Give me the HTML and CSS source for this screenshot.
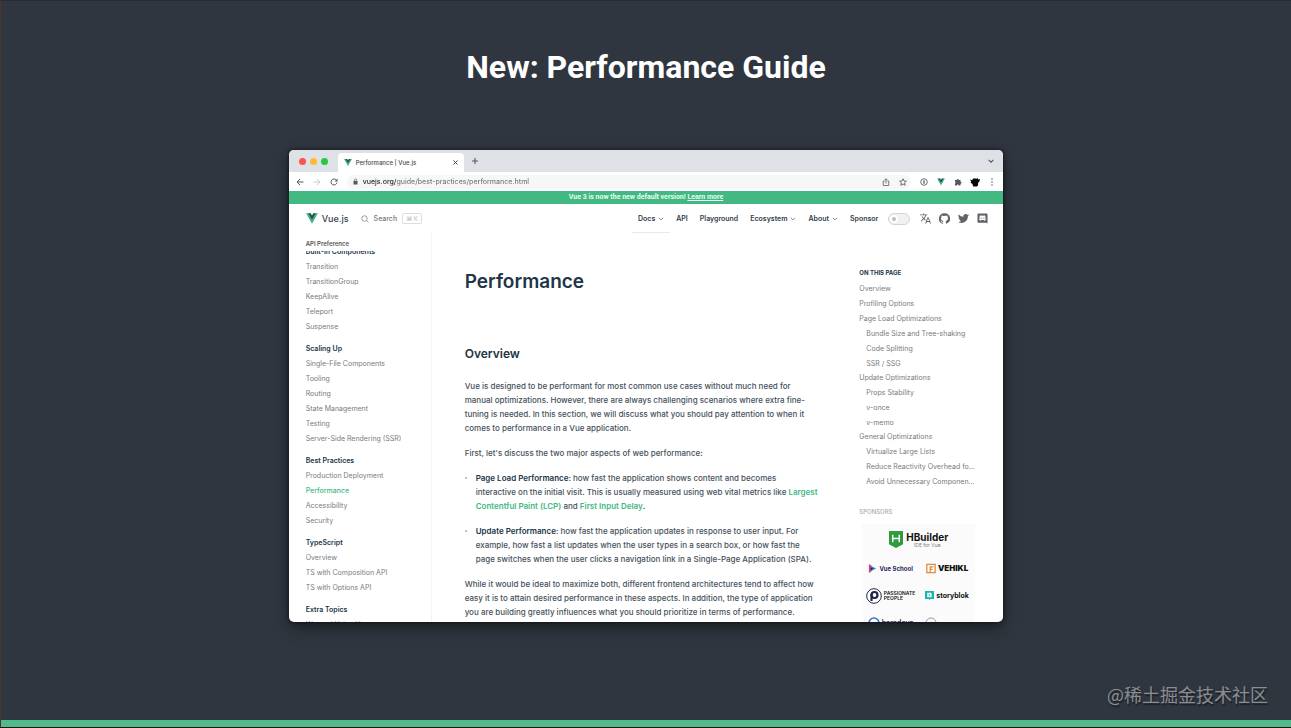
FILE: index.html
```html
<!DOCTYPE html>
<html lang="en">
<head>
<meta charset="utf-8">
<title>New: Performance Guide</title>
<link rel="stylesheet" href="styles.css">
</head>
<body>
<svg class="defs" aria-hidden="true">
  <symbol id="vue" viewBox="0 0 24 21"><path fill="#41b883" d="M0 0h9.200L12 4.800 14.800 0H24L12 20.800z"/><path fill="#34495e" d="M4.600 0h4.600L12 4.800 14.800 0h4.600L12 12.800z"/></symbol>
  <symbol id="chev" viewBox="0 0 10 10"><path d="M1.500 3l3.500 3.500L8.500 3" fill="none" stroke="currentColor" stroke-width="1.400"/></symbol>
</svg>
<main class="slide">
  <h1 class="slide-title">New: Performance Guide</h1>
  <section class="window">
    <div class="tabs">
      <div class="lights"><i class="red"></i><i class="yellow"></i><i class="green"></i></div>
      <div class="tab">
        <svg class="tab-logo"><use href="#vue"/></svg><span>Performance | Vue.js</span>
        <button class="icon-btn close" aria-label="Close tab"><svg viewBox="0 0 10 10"><path d="M1 1l8 8M9 1l-8 8" stroke="currentColor" stroke-width="2"/></svg></button>
      </div>
      <button class="icon-btn plus" aria-label="New tab"><svg viewBox="0 0 10 10"><path d="M5 0v10M0 5h10" stroke="currentColor" stroke-width="1.800"/></svg></button>
      <button class="icon-btn tab-more" aria-label="Search tabs"><svg viewBox="0 0 10 10"><path d="M1 3l4 4 4-4" fill="none" stroke="currentColor" stroke-width="1.800"/></svg></button>
    </div>
    <div class="toolbar">
      <button class="icon-btn" aria-label="Back"><svg viewBox="0 0 16 16"><path d="M15 8H2M8 2L2 8l6 6" fill="none" stroke="currentColor" stroke-width="2"/></svg></button>
      <button class="icon-btn faint" aria-label="Forward"><svg viewBox="0 0 16 16"><path d="M1 8h13M8 2l6 6-6 6" fill="none" stroke="currentColor" stroke-width="2"/></svg></button>
      <button class="icon-btn" aria-label="Reload"><svg viewBox="0 0 16 16"><path d="M13 4.500A6 6 0 1 0 14 9" fill="none" stroke="currentColor" stroke-width="2"/><path d="M15 1v6H9z" fill="currentColor"/></svg></button>
      <div class="address">
        <svg class="lock" viewBox="0 0 10 12"><path d="M1 5h8v7H1z" fill="currentColor"/><path d="M2.700 5V3.300a2.300 2.300 0 0 1 4.600 0V5" fill="none" stroke="currentColor" stroke-width="1.400"/></svg>
        <input class="url" type="text" aria-label="Address" value="vuejs.org/guide/best-practices/performance.html">
        <button class="icon-btn" aria-label="Share"><svg viewBox="0 0 16 16"><path d="M5 6H2.500v9h11V6H11M8 11V2M5 4.500L8 1.500l3 3" fill="none" stroke="currentColor" stroke-width="1.600"/></svg></button>
        <button class="icon-btn" aria-label="Bookmark"><svg viewBox="0 0 16 16"><path d="M8 1.500l2 4.500 4.800.4-3.700 3.200 1.200 4.900L8 12l-4.300 2.500 1.200-4.900L1.200 6.400 6 6z" fill="none" stroke="currentColor" stroke-width="1.700"/></svg></button>
      </div>
      <div class="extensions">
        <button class="icon-btn" aria-label="Password manager"><svg viewBox="0 0 16 16"><circle cx="8" cy="8" r="6.600" fill="none" stroke="currentColor" stroke-width="1.700"/><path d="M8 4.500v7" stroke="currentColor" stroke-width="2.600"/></svg></button>
        <button class="icon-btn" aria-label="Vue devtools"><svg><use href="#vue"/></svg></button>
        <button class="icon-btn" aria-label="Extensions"><svg viewBox="0 0 16 16"><path fill="currentColor" d="M2 4h3.500a2 2 0 1 1 4 0H13v3.500a2 2 0 1 1 0 4V15H9.500a2 2 0 0 0-4 0H2v-4a2 2 0 0 0 0-3.500z"/></svg></button>
        <button class="icon-btn avatar" aria-label="Profile"><svg viewBox="0 0 16 16"><path fill="#050505" d="M0 4l4 1V3l4-1 2 1 2-2 1 3 3-1-1 4-2 2v4l-2 2H5l-1-4-3-2 1-2z"/></svg></button>
        <button class="icon-btn" aria-label="Menu"><svg viewBox="0 0 16 16"><g fill="currentColor"><circle cx="8" cy="2" r="1.500"/><circle cx="8" cy="8" r="1.500"/><circle cx="8" cy="14" r="1.500"/></g></svg></button>
      </div>
    </div>
    <div class="banner">Vue 3 is now the new default version! <a href="#">Learn more</a></div>
    <header class="nav">
      <a class="brand" href="#"><svg><use href="#vue"/></svg>Vue.js</a>
      <button class="search"><svg viewBox="0 0 16 16"><circle cx="7" cy="7" r="5.500" fill="none" stroke="currentColor" stroke-width="1.400"/><path d="M11 11l4 4" stroke="currentColor" stroke-width="1.400"/></svg>Search<kbd>⌘ K</kbd></button>
      <nav class="menu">
        <a class="active" href="#">Docs<svg><use href="#chev"/></svg></a>
        <a href="#">API</a>
        <a href="#">Playground</a>
        <a href="#">Ecosystem<svg><use href="#chev"/></svg></a>
        <a href="#">About<svg><use href="#chev"/></svg></a>
        <a href="#">Sponsor</a>
      </nav>
      <button class="toggle" role="switch" aria-checked="false" aria-label="Dark mode"><i></i></button>
      <div class="social">
        <a href="#" aria-label="Language"><svg viewBox="0 0 24 24"><path fill="currentColor" d="M0 3h7V1h2v2h7v2h-2.500C12.800 8 11.400 10.400 9.600 12.200l2.800 2.600-.8 2L8 13.600l-5 5-1.400-1.400 5-5C5.200 10.600 4.200 9 3.600 7.500h2.200c.6 1.200 1.300 2.200 2.300 3.300C9.700 9.100 10.800 7.200 11.400 5H0zM16.500 9h2.200L24 23h-2.200l-1.300-3.500h-5.800L13.400 23h-2.200zm-1.100 8.500h4.400l-2.200-5.800z"/></svg></a>
        <a href="#" aria-label="GitHub"><svg viewBox="0 0 24 24"><path fill="currentColor" d="M12 .3a12 12 0 0 0-3.800 23.400c.6.100.8-.3.800-.6v-2c-3.300.7-4-1.600-4-1.600-.6-1.400-1.400-1.800-1.400-1.800-1-.7.1-.7.1-.7 1.200 0 1.900 1.200 1.900 1.200 1 1.800 2.800 1.300 3.500 1 0-.8.400-1.300.7-1.600-2.700-.3-5.500-1.300-5.500-6 0-1.200.5-2.300 1.300-3.100-.2-.4-.6-1.600 0-3.200 0 0 1-.3 3.400 1.200a11.500 11.500 0 0 1 6 0c2.300-1.500 3.300-1.200 3.300-1.200.6 1.600.2 2.800.1 3.200.8.800 1.300 1.900 1.300 3.200 0 4.600-2.800 5.600-5.500 5.900.5.400.9 1 .9 2.200v3.300c0 .3.100.7.800.6A12 12 0 0 0 12 .3"/></svg></a>
        <a href="#" aria-label="Twitter"><svg viewBox="0 0 24 24"><path fill="currentColor" d="M24 4.600a10 10 0 0 1-2.800.8 4.900 4.900 0 0 0 2.100-2.700 10 10 0 0 1-3.100 1.200 4.900 4.900 0 0 0-8.400 4.500A14 14 0 0 1 1.700 3.100a4.900 4.900 0 0 0 1.500 6.600 4.900 4.900 0 0 1-2.200-.6 4.900 4.900 0 0 0 3.900 4.900 5 5 0 0 1-2.200.1 4.900 4.900 0 0 0 4.600 3.400A9.900 9.900 0 0 1 0 19.500a14 14 0 0 0 21.500-12.400A10 10 0 0 0 24 4.600z"/></svg></a>
        <a href="#" aria-label="Discord"><svg viewBox="0 0 24 24"><path fill="currentColor" fill-rule="evenodd" d="M3 1h18a2 2 0 0 1 2 2v20l-3-2H3a2 2 0 0 1-2-2V3a2 2 0 0 1 2-2zm3 5L5 15l3 2 1-2h6l1 2 3-2-1-9-3-1-1 1h-4L9 5zm3 4a1.200 1.200 0 1 1 0 2.400 1.200 1.200 0 0 1 0-2.400zm6 0a1.200 1.200 0 1 1 0 2.400 1.200 1.200 0 0 1 0-2.400z"/></svg></a>
      </div>
    </header>
    <div class="content">
      <aside class="sidebar">
        <div class="pref">API Preference</div>
        <div class="groups">
          <section><h2>Built-in Components</h2><a href="#">Transition</a><a href="#">TransitionGroup</a><a href="#">KeepAlive</a><a href="#">Teleport</a><a href="#">Suspense</a></section>
          <section><h2>Scaling Up</h2><a href="#">Single-File Components</a><a href="#">Tooling</a><a href="#">Routing</a><a href="#">State Management</a><a href="#">Testing</a><a href="#">Server-Side Rendering (SSR)</a></section>
          <section><h2>Best Practices</h2><a href="#">Production Deployment</a><a class="current" href="#">Performance</a><a href="#">Accessibility</a><a href="#">Security</a></section>
          <section><h2>TypeScript</h2><a href="#">Overview</a><a href="#">TS with Composition API</a><a href="#">TS with Options API</a></section>
          <section><h2>Extra Topics</h2><a href="#">Ways of Using Vue</a></section>
        </div>
      </aside>
      <article class="doc">
        <h2 class="doc-title">Performance</h2>
        <h3>Overview</h3>
        <p>Vue is designed to be performant for most common use cases without much need for<br>manual optimizations. However, there are always challenging scenarios where extra fine-<br>tuning is needed. In this section, we will discuss what you should pay attention to when it<br>comes to performance in a Vue application.</p>
        <p>First, let's discuss the two major aspects of web performance:</p>
        <ul>
          <li><strong>Page Load Performance</strong>: how fast the application shows content and becomes<br>interactive on the initial visit. This is usually measured using web vital metrics like <a href="#">Largest<br>Contentful Paint (LCP)</a> and <a href="#">First Input Delay</a>.</li>
          <li><strong>Update Performance</strong>: how fast the application updates in response to user input. For<br>example, how fast a list updates when the user types in a search box, or how fast the<br>page switches when the user clicks a navigation link in a Single-Page Application (SPA).</li>
        </ul>
        <p>While it would be ideal to maximize both, different frontend architectures tend to affect how<br>easy it is to attain desired performance in these aspects. In addition, the type of application<br>you are building greatly influences what you should prioritize in terms of performance.</p>
      </article>
      <aside class="toc">
        <h2>ON THIS PAGE</h2>
        <ul>
          <li><a href="#">Overview</a></li>
          <li><a href="#">Profiling Options</a></li>
          <li><a href="#">Page Load Optimizations</a>
            <ul><li><a href="#">Bundle Size and Tree-shaking</a></li><li><a href="#">Code Splitting</a></li><li><a href="#">SSR / SSG</a></li></ul></li>
          <li><a href="#">Update Optimizations</a>
            <ul><li><a href="#">Props Stability</a></li><li><a href="#">v-once</a></li><li><a href="#">v-memo</a></li></ul></li>
          <li><a href="#">General Optimizations</a>
            <ul><li><a href="#">Virtualize Large Lists</a></li><li><a href="#">Reduce Reactivity Overhead fo...</a></li><li><a href="#">Avoid Unnecessary Componen...</a></li></ul></li>
        </ul>
        <h2 class="sponsor-title">SPONSORS</h2>
        <div class="sponsors">
          <a class="wide" href="#"><svg class="hb" viewBox="0 0 15 18"><path fill="#2f9a3f" d="M0 0h15v14l-7.500 4L0 14z"/><path d="M4 4v8M11 4v8M4 8h7" stroke="#fff" stroke-width="1.500"/></svg><span><b>HBuilder</b><small>IDE for Vue</small></span></a>
          <a class="school" href="#"><svg viewBox="0 0 10 10"><path fill="#e8366f" d="M1 0l3 2v6L1 10z"/><path fill="#2b8fc6" d="M3 2l6 3-6 3z"/><path fill="#22235f" d="M3 4l3 1-3 2z"/></svg>Vue School</a>
          <a class="vehikl" href="#"><svg viewBox="0 0 12 12"><path d="M1 1h10v10H1zM5 11V4h4M5 7h3" fill="none" stroke="#e08a3c" stroke-width="1.500"/></svg>VEHIKL</a>
          <a class="people" href="#"><svg viewBox="0 0 16 16"><circle cx="8" cy="8" r="7.300" fill="#fff" stroke="#1d2648"/><circle cx="8.500" cy="7" r="3" fill="none" stroke="#1d2648" stroke-width="2.200"/><path d="M5.500 6v7" stroke="#1d2648" stroke-width="2.200"/></svg><span>PASSIONATE<br>PEOPLE</span></a>
          <a class="story" href="#"><svg viewBox="0 0 10 10"><path fill="#19b5ae" d="M0 0h10v9H6l-1 1-1-1H0z"/><path fill="#fff" d="M2.500 2h4l1 1-.5 1.500.7 1-.7 1.500H2.500zM4 3.300v.8h1.500v-.8zm0 1.800v.8h2v-.8z"/></svg>storyblok</a>
          <a class="partial" href="#"><svg viewBox="0 0 12 12"><circle cx="6" cy="6" r="5" fill="none" stroke="#3b6ed8" stroke-width="1.600"/><path d="M3 6h6" stroke="#3b6ed8" stroke-width="2"/></svg>herodevs</a>
          <a class="partial short" href="#" aria-label="Sponsor"><svg viewBox="0 0 12 12"><circle cx="6" cy="6" r="5" fill="none" stroke="#999"/></svg></a>
        </div>
      </aside>
    </div>
  </section>
  <div class="watermark" lang="zh-CN">@稀土掘金技术社区</div>
</main>
</body>
</html>
```
FILE: styles.css
```css
* { box-sizing: border-box; }
body { margin: 0; background: #303640; font-family: Inter, sans-serif; }
a { color: inherit; text-decoration: none; }
ul { list-style: none; margin: 0; padding: 0; }
h1, h2, h3, p { margin: 0; }
button { border: 0; padding: 0; background: none; color: inherit; font: inherit; }
.defs { display: none; }

.slide { position: relative; display: flex; flex-direction: column; align-items: center; height: 100vh; padding-top: 47px; border-top: 1px solid #292b2d; border-left: 1px solid #49372f; border-bottom: 1px solid #111; box-shadow: inset 0 -7px #50ba8c; }
.slide-title { color: #fff; font: 700 32px/38px Roboto, sans-serif; }
.window { display: flex; flex-direction: column; width: 55.4%; height: calc(100vh - 256px); margin-top: 64px; border-radius: 5px; overflow: hidden; background: #fff; box-shadow: 0 6px 16px rgba(0, 0, 0, .45), 0 0 4px rgba(0, 0, 0, .6); }
.watermark { position: absolute; right: 23px; bottom: 20px; color: #8a8d92; font: 18px/26px "Noto Sans CJK SC", sans-serif; text-shadow: 1px 2px 1px #1c2026; }

.tabs { display: flex; align-items: center; flex: none; height: 22px; padding: 0 9px 0 10px; background: #dee1e6; }
.lights { display: flex; gap: 4px; width: 39px; }
.lights i { width: 7px; height: 7px; border-radius: 50%; }
.red { background: #f9554f; }
.yellow { background: #fdbc38; }
.green { background: #27c840; }
.tab { display: flex; align-items: center; gap: 4px; align-self: flex-end; width: 126px; height: 19px; padding: 0 6px; border-radius: 4px 4px 0 0; background: #fff; color: #44474b; font-size: 6px; font-weight: 500; }
.tab-logo { width: 8px; height: 7px; }
.icon-btn { display: flex; flex: none; }
.icon-btn svg { width: 8px; height: 8px; }
.close { margin-left: auto; }
.close svg { width: 5px; height: 5px; }
.plus { margin-left: 8px; color: #55585c; }
.plus svg, .tab-more svg { width: 6px; height: 6px; }
.tab-more { margin-left: auto; color: #55585c; }
.toolbar { display: flex; align-items: center; flex: none; gap: 9px; height: 19px; padding: 0 7px; color: #55585c; }
.faint { color: #c8c9cb; }
.address { display: flex; flex: 1; align-items: center; gap: 9px; height: 14px; padding: 0 4px 0 6px; border-radius: 7px; background: #f7f7f7; }
.lock { width: 5px; height: 7px; }
.url { flex: 1; min-width: 0; margin-left: -4px; padding: 0; border: 0; font: 500 7px/12px Inter, sans-serif; color: transparent; background: linear-gradient(90deg, #222 33px, #777 33px); -webkit-background-clip: text; background-clip: text; }
.extensions { display: flex; align-items: center; gap: 9px; }
.avatar svg { width: 10px; height: 10px; }
.avatar { margin: 0 -1px; }
.banner { flex: none; background: #42b883; color: #eafaf2; text-align: center; font: 700 7px/13px Roboto, sans-serif; }
.banner a { text-decoration: underline; }

.nav { display: flex; align-items: center; flex: none; height: 29px; padding: 0 15px 0 17px; color: #33404d; }
.brand { display: flex; align-items: center; gap: 4px; font-size: 9px; font-weight: 500; }
.brand svg { width: 12px; height: 11px; }
.search { display: flex; align-items: center; gap: 5px; margin-left: 12px; color: #777; font-size: 7px; font-weight: 500; }
.search svg { width: 8px; height: 8px; }
kbd { padding: 0 3px; border: 1px solid #ddd; border-radius: 2px; color: #bbb; font: 6px/9px Inter, sans-serif; }
.menu { display: flex; gap: 12px; align-self: stretch; margin-left: auto; font-size: 7px; font-weight: 600; }
.menu a { display: flex; align-items: center; gap: 3px; }
.menu svg { width: 6px; height: 6px; color: #777; }
.menu .active { margin: 0 -6px; padding: 0 6px; box-shadow: inset 0 -1px #e9e9e9; }
.toggle { width: 22px; height: 12px; margin-left: 10px; padding: 1px; border: 1px solid #d4d4d6; border-radius: 6px; background: #f1f1f1; }
.toggle i { display: block; width: 8px; height: 8px; border: 2px solid #fff; border-radius: 50%; background: #bbb; }
.social { display: flex; gap: 8px; margin-left: 10px; color: #606469; }
.social svg { display: block; width: 11px; height: 11px; }

.content { display: flex; flex: 1; min-height: 0; }
.sidebar { display: flex; flex-direction: column; flex: none; width: 143px; padding-left: 17px; border-right: 1px solid #f4f4f4; color: #777b80; font-size: 7px; line-height: 15px; }
.pref { flex: none; height: 18px; padding-top: 3px; color: #555; font-size: 6px; font-weight: 600; }
.groups { flex: 1; min-height: 0; overflow: hidden; }
.groups section { margin-bottom: 7px; }
.groups section:first-child { margin-top: -7px; }
.groups h2 { color: #213547; font: 600 7px/15px Inter, sans-serif; }
.groups a { display: block; }
.groups .current { color: #42b883; font-weight: 500; }

.doc { flex: 1; min-width: 0; padding: 37px 0 0 33px; overflow: hidden; color: #46515b; font-size: 8px; font-weight: 500; line-height: 14px; white-space: nowrap; }
.doc-title { color: #213547; font-size: 19px; font-weight: 600; line-height: 24px; }
.doc h3 { margin: 52px 0 17px; color: #213547; font-size: 12px; font-weight: 600; line-height: 16px; }
.doc p { margin-bottom: 11px; }
.doc li { position: relative; margin-bottom: 11px; padding-left: 11px; }
.doc li::before { content: ""; position: absolute; left: 0; top: 6px; width: 2px; height: 2px; border-radius: 50%; background: #aaa; }
.doc strong { color: #213547; font-weight: 600; }
.doc li a { color: #42b883; font-weight: 600; }

.toc { flex: none; width: 176px; padding: 32px 28px 0 32px; overflow: hidden; color: #777b80; font-size: 7px; line-height: 15px; }
.toc h2 { color: #213547; font: 700 6px/16px Inter, sans-serif; }
.toc li a { display: block; white-space: nowrap; }
.toc li ul { margin-bottom: -1px; padding-left: 7px; }
.toc .sponsor-title { margin-top: 16px; color: #aaa; font-weight: 500; }
.sponsors { display: grid; grid-template-columns: 1fr 1fr; margin: 4px 0 0 3px; background: #fbfbfb; color: #111; }
.sponsors a { display: flex; align-items: center; justify-content: center; gap: 2px; height: 27px; white-space: nowrap; }
.sponsors .wide { grid-column: 1 / -1; gap: 3px; height: 31px; }
.wide span { display: grid; justify-items: center; line-height: 10px; }
.wide b { font-size: 10px; }
.wide small { color: #777; font-size: 5px; line-height: 6px; }
.hb { width: 14px; height: 17px; }
.school { color: #25265e; font-size: 6px; font-weight: 700; }
.school svg, .story svg { width: 9px; height: 9px; }
.vehikl { font-size: 8px; font-weight: 900; }
.vehikl svg { width: 10px; height: 11px; }
.people { font-size: 5px; font-weight: 600; line-height: 5px; }
.people svg { width: 16px; height: 16px; }
.story { font-weight: 700; }
.partial { color: #25265e; font-weight: 600; }
.partial svg { width: 12px; height: 12px; }
.sponsors .short { justify-content: flex-start; padding-left: 6px; }
```
